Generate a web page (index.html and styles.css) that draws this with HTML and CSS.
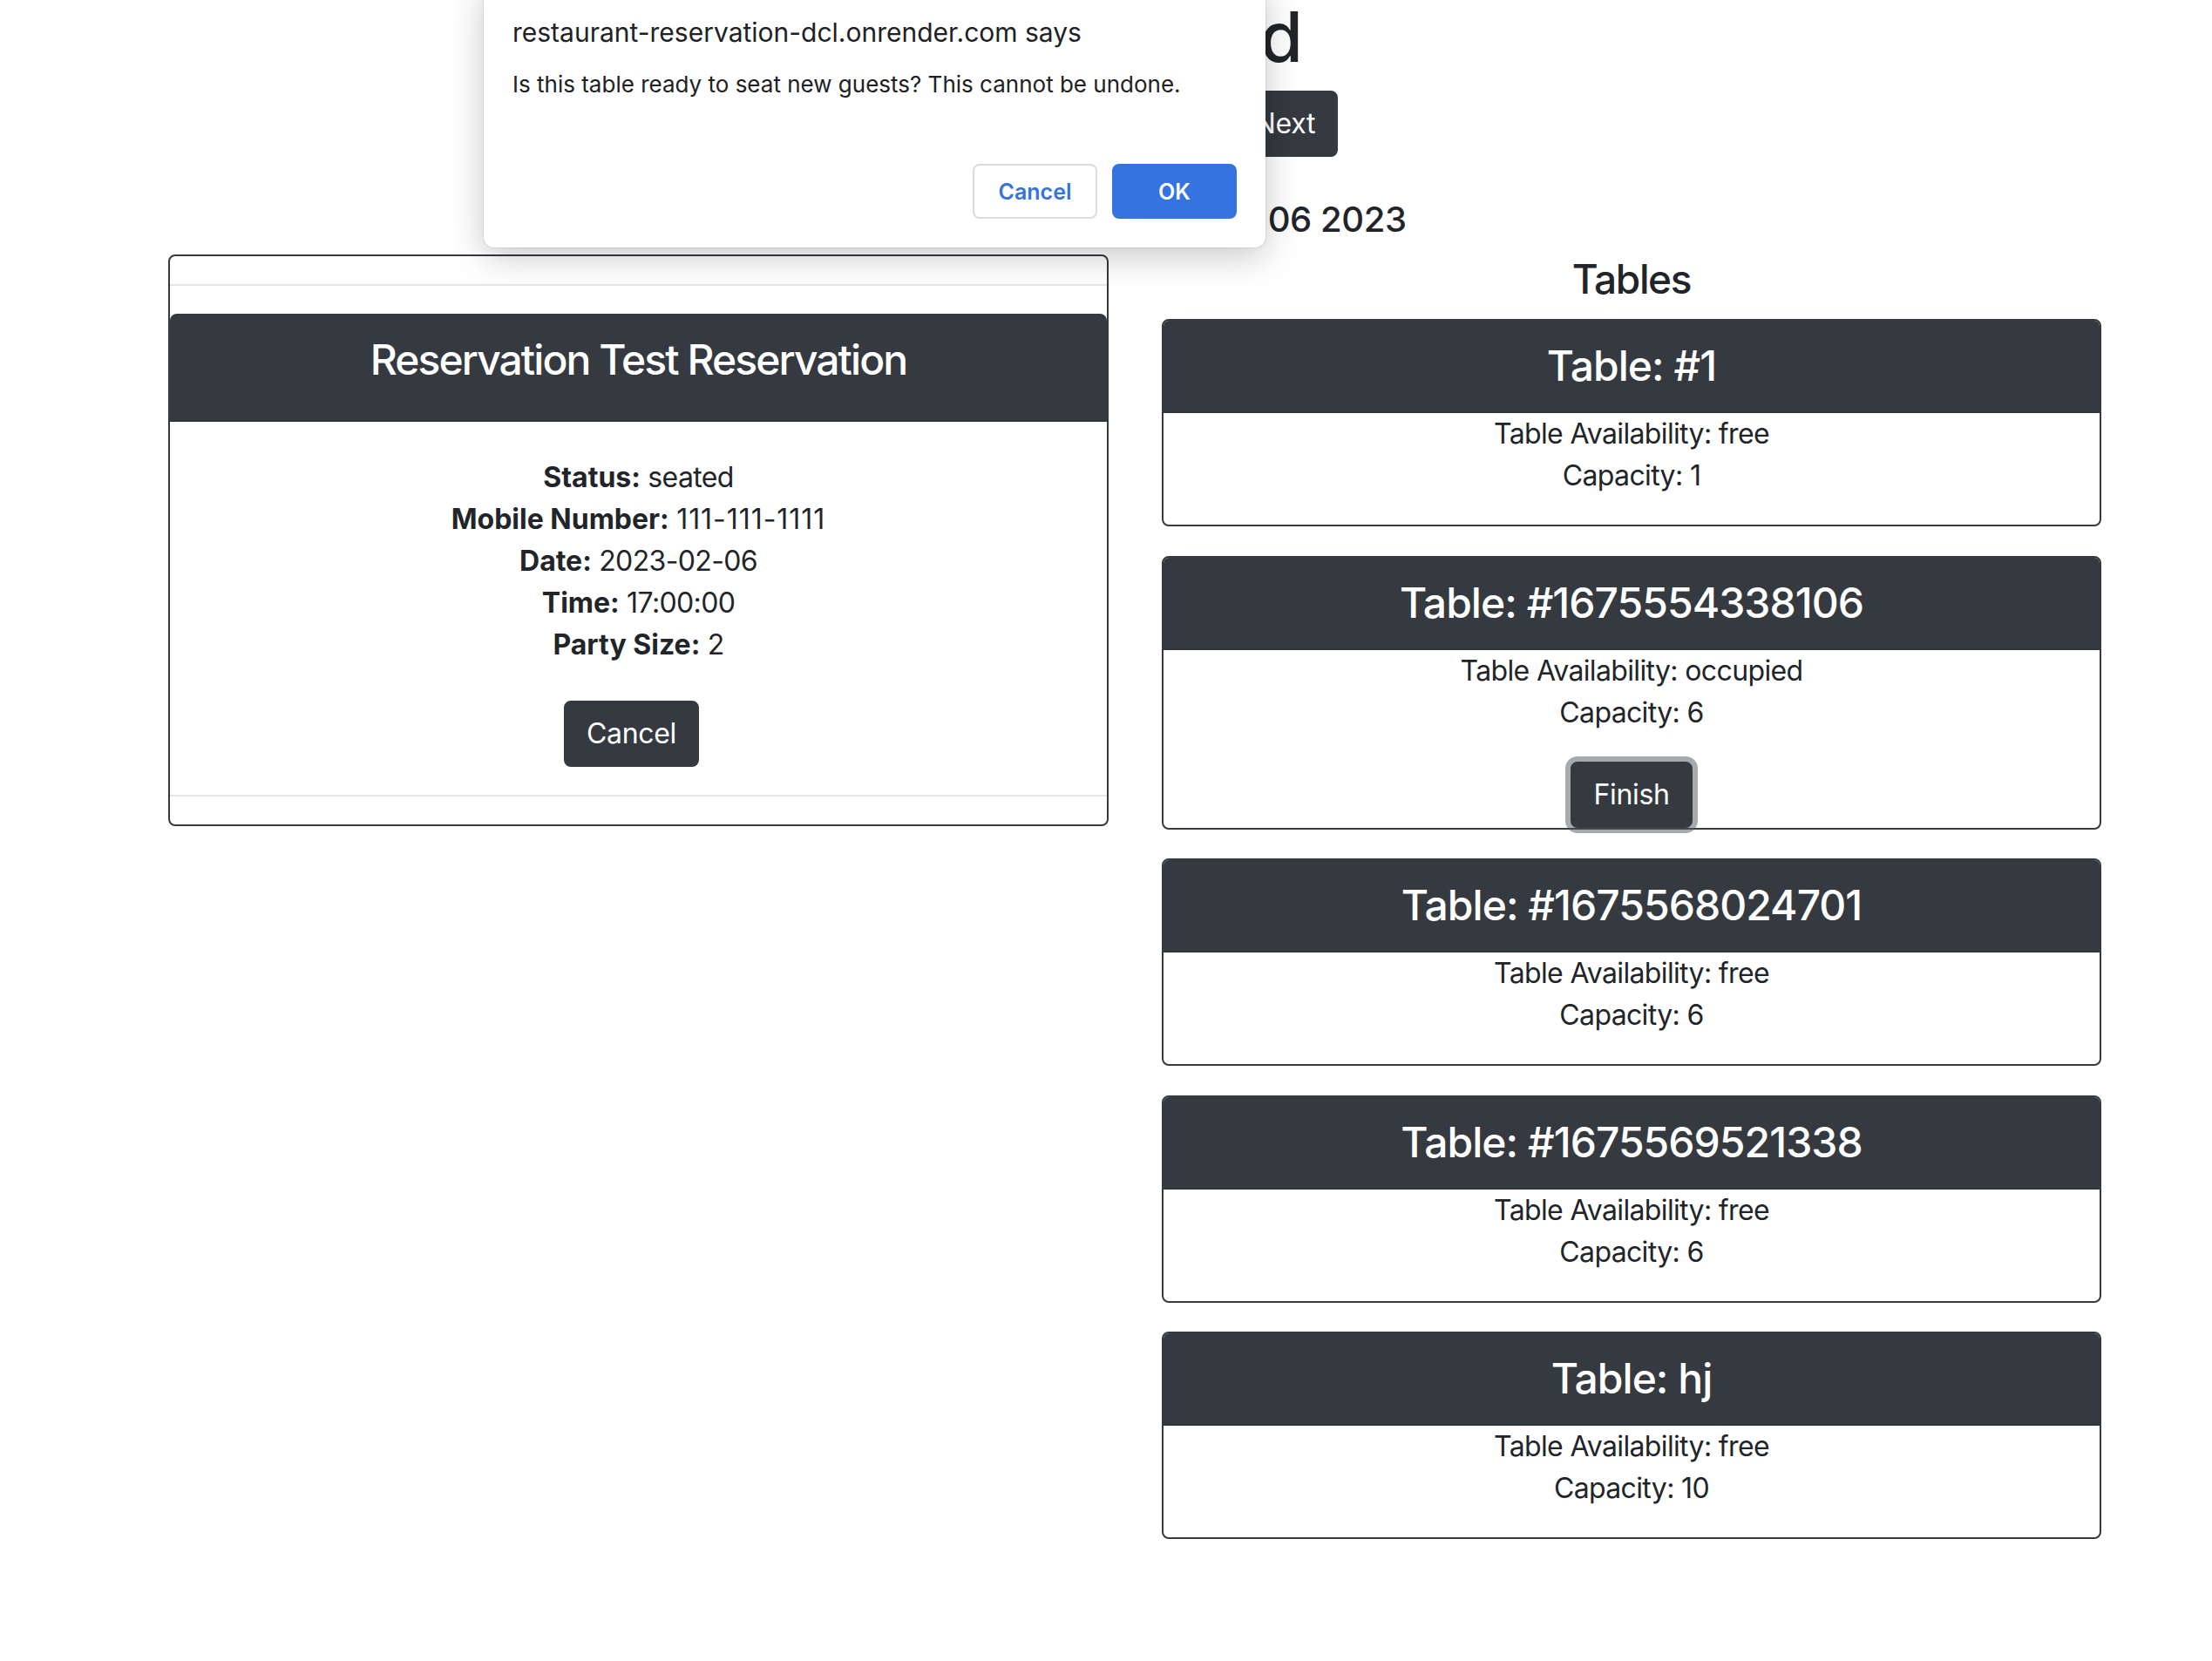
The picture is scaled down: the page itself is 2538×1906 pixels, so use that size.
FILE: index.html
```html
<!DOCTYPE html>
<html lang="en">
<head>
<meta charset="utf-8">
<title>Dashboard</title>
<link rel="stylesheet" href="styles.css">
</head>
<body>
<main class="page">
  <header class="dash-head">
    <h1 class="dash-title">Dashboard</h1>
    <div class="day-nav">
      <button class="btn btn-dark">Previous</button>
      <button class="btn btn-dark">Today</button>
      <button class="btn btn-dark">Next</button>
    </div>
    <h5 class="dash-date">Reservations for Mon Feb 06 2023</h5>
  </header>

  <div class="board">
    <section class="col">
      <div class="res-card">
        <div class="res-gap"></div>
        <div class="res-inner">
          <div class="res-header">
            <h4 class="res-title">Reservation Test Reservation</h4>
          </div>
          <div class="res-body">
            <div class="res-line"><b>Status:</b> seated</div>
            <div class="res-line"><b>Mobile Number:</b> <span class="phone">111-111-1111</span></div>
            <div class="res-line"><b>Date:</b> 2023-02-06</div>
            <div class="res-line"><b>Time:</b> 17:00:00</div>
            <div class="res-line"><b>Party Size:</b> 2</div>
            <button class="btn btn-dark res-cancel">Cancel</button>
          </div>
        </div>
        <div class="res-gap res-gap-bottom"></div>
      </div>
    </section>

    <section class="col">
      <h4 class="tables-title">Tables</h4>

      <div class="t-card">
        <div class="t-header"><h4 class="t-name">Table: #1</h4></div>
        <div class="t-body">
          <div>Table Availability: free</div>
          <div>Capacity: 1</div>
        </div>
      </div>

      <div class="t-card">
        <div class="t-header"><h4 class="t-name">Table: #1675554338106</h4></div>
        <div class="t-body">
          <div>Table Availability: occupied</div>
          <div>Capacity: 6</div>
        </div>
        <div class="t-actions"><button class="btn btn-dark btn-focus">Finish</button></div>
      </div>

      <div class="t-card">
        <div class="t-header"><h4 class="t-name">Table: #1675568024701</h4></div>
        <div class="t-body">
          <div>Table Availability: free</div>
          <div>Capacity: 6</div>
        </div>
      </div>

      <div class="t-card">
        <div class="t-header"><h4 class="t-name">Table: #1675569521338</h4></div>
        <div class="t-body">
          <div>Table Availability: free</div>
          <div>Capacity: 6</div>
        </div>
      </div>

      <div class="t-card">
        <div class="t-header"><h4 class="t-name">Table: hj</h4></div>
        <div class="t-body">
          <div>Table Availability: free</div>
          <div>Capacity: 10</div>
        </div>
      </div>
    </section>
  </div>
</main>

<div class="alert" role="alertdialog">
  <div class="alert-title">restaurant-reservation-dcl.onrender.com says</div>
  <div class="alert-msg">Is this table ready to seat new guests? This cannot be undone.</div>
  <div class="alert-actions">
    <button class="alert-btn alert-cancel">Cancel</button>
    <button class="alert-btn alert-ok">OK</button>
  </div>
</div>
</body>
</html>
```

FILE: styles.css
```css
html, body {
  margin: 0;
  padding: 0;
  background: #ffffff;
}

body {
  font-family: "Inter", "Roboto", "Liberation Sans", sans-serif;
  font-size: 32px;
  line-height: 48px;
  color: #212529;
  letter-spacing: -0.02em;
  position: relative;
  min-height: 1906px;
}

.page {
  width: 2218px;
  padding-left: 193px;
}

/* ---------- header ---------- */
.dash-head {
  text-align: center;
}

.dash-title {
  margin: 0 0 20px;
  padding-right: 20px;
  font-size: 80px;
  line-height: 84px;
  font-weight: 500;
  letter-spacing: -0.02em;
}

.day-nav {
  display: flex;
  justify-content: center;
  gap: 16px;
  padding-right: 10px;
}

.dash-date {
  margin: 48px 0 16px;
  padding-right: 26px;
  font-size: 40px;
  line-height: 48px;
  font-weight: 500;
  letter-spacing: -0.01em;
}

/* ---------- buttons ---------- */
.btn {
  font-family: inherit;
  font-size: 32px;
  line-height: 48px;
  letter-spacing: -0.01em;
  padding: 12px 24px;
  border-radius: 8px;
  border: 2px solid transparent;
  cursor: pointer;
}

.btn-dark {
  background: #343a40;
  border-color: #343a40;
  color: #ffffff;
}

.btn-focus {
  box-shadow: 0 0 0 6px rgba(82, 88, 93, 0.5);
}

/* ---------- board ---------- */
.board {
  display: grid;
  grid-template-columns: 1079px 1078px;
  column-gap: 61px;
  align-items: start;
}

/* reservation card */
.res-card {
  border: 2px solid #343a40;
  border-radius: 8px;
  background: #fff;
}

.res-gap {
  height: 32px;
  border-bottom: 2px solid #e6e6e6;
  margin-bottom: 32px;
}

.res-gap-bottom {
  border-bottom: none;
  border-top: 2px solid #e6e6e6;
  margin-bottom: 0;
}

.res-header {
  background: #343a40;
  color: #ffffff;
  border-radius: 8px 8px 0 0;
  padding: 24px 40px;
  border-bottom: 2px solid #2f3439;
  text-align: center;
}

.res-title {
  margin: 0 0 16px;
  font-size: 48px;
  line-height: 57.6px;
  font-weight: 500;
  letter-spacing: -0.04em;
}

.res-body {
  padding: 40px 40px 32px;
  text-align: center;
}

.res-line b {
  font-weight: 700;
  letter-spacing: 0;
}

.phone {
  letter-spacing: 0.03em;
}

.res-cancel {
  margin-top: 40px;
  margin-right: 16px;
}

/* tables */
.tables-title {
  margin: 0 0 18px;
  text-align: center;
  font-size: 46px;
  line-height: 56px;
  font-weight: 500;
  letter-spacing: -0.03em;
}

.t-card {
  border: 2px solid #343a40;
  border-radius: 8px;
  margin-bottom: 33.5px;
  text-align: center;
  background: #fff;
}

.t-header {
  background: #343a40;
  color: #ffffff;
  border-radius: 6px 6px 0 0;
  padding: 24px 40px;
  border-bottom: 2px solid #2f3439;
}

.t-name {
  margin: 0;
  font-size: 48px;
  line-height: 56px;
  font-weight: 500;
  letter-spacing: -0.02em;
}

.t-body {
  padding-bottom: 32px;
}

.t-actions {
  margin-top: -32px;
  padding-top: 32px;
}

.t-actions .btn {
  display: inline-block;
  vertical-align: top;
  margin-bottom: 0;
}

/* ---------- native-like alert ---------- */
.alert {
  position: absolute;
  left: 555px;
  top: -20px;
  width: 897px;
  height: 304px;
  box-sizing: border-box;
  padding: 37px 33px 33px;
  background: #ffffff;
  border-radius: 12px;
  box-shadow: 0 10px 40px rgba(0, 0, 0, 0.22), 0 0 2px rgba(0, 0, 0, 0.25);
  display: flex;
  flex-direction: column;
  color: #202124;
  letter-spacing: 0;
}

.alert-title {
  font-size: 30px;
  line-height: 40px;
}

.alert-msg {
  margin-top: 24px;
  font-size: 26px;
  line-height: 32px;
}

.alert-actions {
  margin-top: auto;
  display: flex;
  justify-content: flex-end;
  gap: 17px;
}

.alert-btn {
  width: 143px;
  height: 63px;
  border-radius: 8px;
  font-family: inherit;
  font-size: 25px;
  font-weight: 600;
  cursor: pointer;
}

.alert-cancel {
  background: #ffffff;
  border: 2px solid #dcdcdc;
  color: #3574e0;
}

.alert-ok {
  background: #3574e0;
  border: 2px solid #3574e0;
  color: #ffffff;
}
```
